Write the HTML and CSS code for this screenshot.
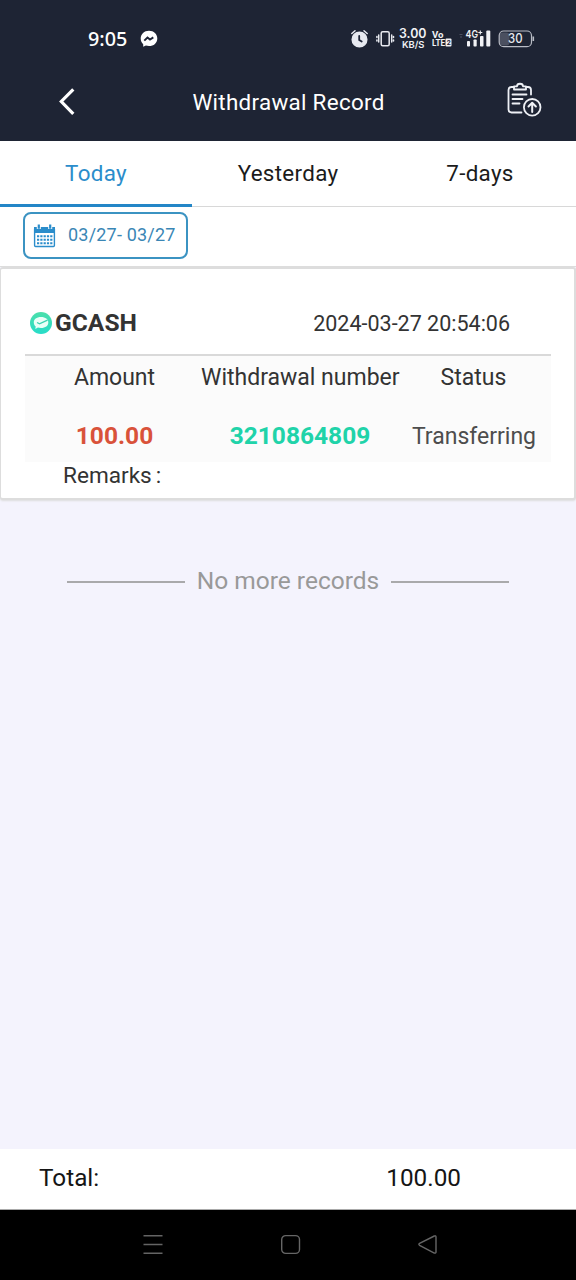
FILE: index.html
```
<!DOCTYPE html>
<html lang="en">
<head>
<meta charset="utf-8">
<title>Withdrawal Record</title>
<link rel="stylesheet" href="styles.css">
</head>
<body>
<div class="screen">
  <header class="header">
    <div class="status">
      <span class="clock">9:05</span>
      <svg class="messenger" width="18" height="18" viewBox="0 0 18 18"><path d="M9 .7C4.200.7.700 4.100.700 8.600c0 2.300 1 4.200 2.500 5.700v2.500l2.700-1.200c1 .3 2 .5 3.100.5 4.800 0 8.300-3.300 8.300-7.700S13.800.7 9 .7z" fill="#fff"/><path d="M4.300 10.700l3.200-3.200 2.500 2 3.300-2.100" fill="none" stroke="#1e2436" stroke-width="1.900"/></svg>
      <svg class="indicators" width="186" height="28" viewBox="350 24 186 28">
        <g fill="none" stroke="#e8eaf0" stroke-width="1.500" stroke-linecap="round">
          <circle cx="359.500" cy="39.500" r="7.300" fill="#e8eaf0"/>
          <path d="M351.800 33.500l3.200-2.800M367.200 33.500l-3.200-2.800"/>
          <path d="M359.200 36v4l2.500 1.600" stroke="#1e2436" stroke-width="1.800"/>
          <rect x="381.200" y="31.800" width="8" height="14" rx="1.500"/>
          <path d="M378.700 35v7M391.700 35v7M376.900 36.500v1M376.900 40v1M393.500 36.500v1M393.500 40v1"/>
        </g>
        <g class="tiny" fill="#f1f2f5">
          <text class="rate" x="399" y="38.400" font-size="12.500" textLength="27.500" lengthAdjust="spacingAndGlyphs">3.00</text>
          <text class="rate" x="402" y="48.400" font-size="9.500" textLength="22.500" lengthAdjust="spacingAndGlyphs">KB/S</text>
          <text x="432" y="37.500" font-size="9.500" textLength="11.500" lengthAdjust="spacingAndGlyphs">Vo</text>
          <text x="432" y="46.300" font-size="9.500" textLength="13" lengthAdjust="spacingAndGlyphs">LTE</text>
          <rect x="445.500" y="38.500" width="6" height="8" rx="1"/>
          <text x="446.800" y="45.300" font-size="7" fill="#1e2436">2</text>
          <text class="rate" x="465.500" y="38" font-size="11" textLength="12.500" lengthAdjust="spacingAndGlyphs">4G</text>
          <path d="M478.300 32.500h4M480.300 30.500v4" stroke="#f1f2f5" stroke-width="1.100"/>
          <rect x="467" y="41" width="3" height="5.500" rx=".8"/>
          <rect x="473.500" y="39.500" width="3.200" height="7" rx=".8"/>
          <rect x="480" y="36" width="3.500" height="10.500" rx=".8"/>
          <rect x="486.300" y="30.500" width="4" height="16" rx="1"/>
        </g>
        <path d="M459.500 34.500h3M460 37h2" stroke="#4b5061"/>
        <rect x="499.500" y="32.500" width="10" height="13" rx="3" fill="#4b5060"/>
        <rect x="499.200" y="31" width="32.300" height="15.700" rx="4.500" fill="none" stroke="#b9bcc5" stroke-width="1.200"/>
        <path d="M533.300 36.500v4.500" stroke="#b9bcc5" stroke-width="1.600"/>
        <text class="thin" x="508" y="43.300" font-size="12.500" fill="#e6e8ed" textLength="14.500" lengthAdjust="spacingAndGlyphs">30</text>
      </svg>
    </div>
    <div class="titlebar">
      <svg class="back" width="20" height="32" viewBox="0 0 20 32"><path d="M17.300 3.300L5.300 15.500l12 12.300" fill="none" stroke="#fff" stroke-width="3.200"/></svg>
      <h1 class="title">Withdrawal Record</h1>
      <svg class="report" width="36" height="36" viewBox="506 82 36 36" fill="none" stroke="#eef0f5" stroke-width="1.800" stroke-linecap="round" stroke-linejoin="round"><path d="M514 87h-2.500a3 3 0 0 0-3 3v19.500a3 3 0 0 0 3 3h10M526.500 87h1.500a3 3 0 0 1 3 3v4.500"/><path d="M514 89.500v-3.200h3c0-3.400 6-3.400 6 0h3v3.200z"/><path d="M512.500 94.500h14M512.500 99h10M512.500 103.500h7"/><circle cx="532.200" cy="107.300" r="8.300"/><path d="M532.200 112v-8.500M528.500 106.500l3.700-3.700 3.700 3.700" stroke-width="2"/></svg>
    </div>
  </header>
  <nav class="tabs">
    <span class="tab tab-active">Today</span>
    <span class="tab">Yesterday</span>
    <span class="tab">7-days</span>
  </nav>
  <div class="filter">
    <div class="daterange">
      <svg width="23" height="24" viewBox="0 0 23 24"><rect x="1.600" y="4" width="19.800" height="18.500" rx="1" fill="#fff" stroke="#2b8dcb" stroke-width="1.400"/><path d="M1 3h21v6H1z" fill="#2b8dcb"/><path d="M5.800 1v4M17.200 1v4" stroke="#fff" stroke-width="4"/><path d="M5.800.5v4.300M17.200.5v4.300" stroke="#2b8dcb" stroke-width="2.200"/><path d="M4 12.200h15.500M4 15.700h15.500M4 19.200h15.500" stroke="#2b8dcb" stroke-width="2" stroke-dasharray="2.200 1.100"/></svg>
      <span class="dates">03/27- 03/27</span>
    </div>
  </div>
  <main class="list">
    <section class="card">
      <div class="card-head">
        <svg class="logo" width="24" height="24" viewBox="0 0 24 24"><defs><linearGradient id="mint" x2="0" y2="1"><stop stop-color="#4bdfaa"/><stop offset="1" stop-color="#27dcc9"/></linearGradient></defs><circle cx="12" cy="12" r="11" fill="url(#mint)"/><path d="M12 6c4.500 0 7.300 2.300 7.300 5.500S16.500 17 12 17c-1.200 0-2.200-.1-3.100-.4L6.300 18l.4-2.500C5.500 14.500 4.800 13 4.800 11.500 4.800 8.300 7.500 6 12 6z" fill="#eafff8"/><path d="M8 11.500l2.500 1.300 8-3.600" fill="none" stroke="#3bd2b2" stroke-width="1.400"/></svg>
        <span class="method">GCASH</span>
        <time class="time">2024-03-27 20:54:06</time>
      </div>
      <div class="grid">
        <span class="label">Amount</span>
        <span class="label label-number">Withdrawal number</span>
        <span class="label">Status</span>
        <span class="amount">100.00</span>
        <span class="number">3210864809</span>
        <span class="state">Transferring</span>
      </div>
      <div class="remarks">Remarks<span class="colon">:</span></div>
    </section>
    <div class="end"><span class="rule"></span><span class="end-text">No more records</span><span class="rule"></span></div>
  </main>
  <footer class="total"><span class="total-label">Total:</span><span class="total-value">100.00</span></footer>
  <div class="sysnav">
    <svg width="22" height="22" viewBox="0 0 22 22"><path d="M1.500 1.700h19M1.500 10.500h19M1.500 19.300h19" stroke="#646464" stroke-width="1.500"/></svg>
    <svg width="22" height="22" viewBox="0 0 22 22"><rect x="1.700" y="1.600" width="17.800" height="17.800" rx="4" fill="none" stroke="#666" stroke-width="1.400"/></svg>
    <svg width="22" height="22" viewBox="0 0 22 22"><path d="M17.300 2L2.600 9.300q-1.500 1 0 2L17.300 19q1.700.5 1.700-1V3q0-1.600-1.700-1z" fill="none" stroke="#666" stroke-width="1.400"/></svg>
  </div>
</div>
</body>
</html>
```
FILE: styles.css
```
* { box-sizing: border-box; }
body { margin: 0; font-family: Roboto, "Liberation Sans", sans-serif; color: #333; }
.screen { width: 576px; height: 1280px; display: flex; flex-direction: column; background: #f4f3fd; overflow: hidden; }
.header { height: 141px; flex: none; background: #1e2434; color: #fff; }
.status { height: 76px; display: flex; align-items: center; padding: 0 40px 0 88px; }
.clock { font-family: "Noto Sans", sans-serif; font-size: 19.8px; font-weight: 500; width: 52px; line-height: 28px; padding-top: 1px; }
.messenger { margin-top: 1px; }
.indicators { margin-left: auto; }
.tiny { font-family: Roboto, sans-serif; font-weight: 700; }
.rate { font-family: Inter, sans-serif; font-weight: 600; }
.thin { font-family: Inter, sans-serif; font-weight: 500; }
.titlebar { height: 52px; display: flex; align-items: center; justify-content: space-between; padding: 0 34px 0 56px; }
.title { margin: 0; font-size: 22.4px; font-weight: 400; letter-spacing: .3px; }
.report { margin-top: -5px; }
.back { margin-right: -5px; }
.tabs { height: 66px; flex: none; display: grid; grid-template-columns: repeat(3, 1fr); background: #fff; }
.tab { height: 66px; text-align: center; font-size: 22.4px; line-height: 65px; letter-spacing: .3px; color: #1b1b1b; border-bottom: 1px solid #d8d8d8; }
.tab-active { color: #2b8dcb; border-bottom: 3px solid #2386c7; }
.filter { height: 59px; flex: none; padding: 5px 0 0 23px; background: #fff; }
.daterange { width: 165px; height: 47px; display: flex; align-items: center; gap: 12px; padding-left: 8px; border: 2px solid #3b93c2; border-radius: 8px; color: #3a86b5; }
.dates { font-size: 18px; letter-spacing: .2px; white-space: nowrap; margin-top: -2px; }
.list { flex: 1; border-top: 1px solid #ddd; }
.card { height: 233px; background: #fff; border: solid #ddd; border-width: 2px 2px 2px 1px; border-radius: 3px; padding: 0 23px 0 24px; box-shadow: 0 1px 2px #ddd; }
.card-head { height: 87px; display: flex; align-items: center; border-bottom: 2px solid #d9d9d9; padding: 22px 41px 0 4px; }
.method { font-size: 24.6px; font-weight: 700; margin-left: 2px; }
.time { margin-left: auto; font-size: 21.5px; padding-top: 1px; }
.grid { height: 106px; display: grid; grid-template-columns: 179px 192px 155px; grid-template-rows: 43px 63px; background: #fbfbfb; text-align: center; align-items: center; font-size: 23px; white-space: nowrap; }
.label-number { margin: 0 -3px; }
.amount, .number { font-weight: 700; font-size: 24.5px; padding-top: 10px; }
.amount { color: #d9523a; }
.number { color: #20d3a9; }
.state { padding: 12px 0 0 1px; color: #4d4d4d; font-size: 23px; }
.remarks { font-size: 22.6px; line-height: 28px; padding-left: 38px; }
.colon { margin-left: 4px; }
.end { display: flex; align-items: center; justify-content: center; gap: 12px; height: 28px; margin-top: 67px; color: #999; }
.rule { width: 118px; height: 2px; background: #a9a9ab; margin-top: 2px; }
.end-text { font-size: 24.5px; line-height: 28px; white-space: nowrap; }
.total { height: 61px; flex: none; display: flex; align-items: center; justify-content: space-between; padding: 0 115px 3px 39px; background: #fff; color: #151515; font-size: 24.3px; border-bottom: 1px solid #aaa; }
.sysnav { height: 70px; flex: none; display: flex; justify-content: space-between; align-items: center; padding: 0 137px 0 142px; background: #000; }
```
